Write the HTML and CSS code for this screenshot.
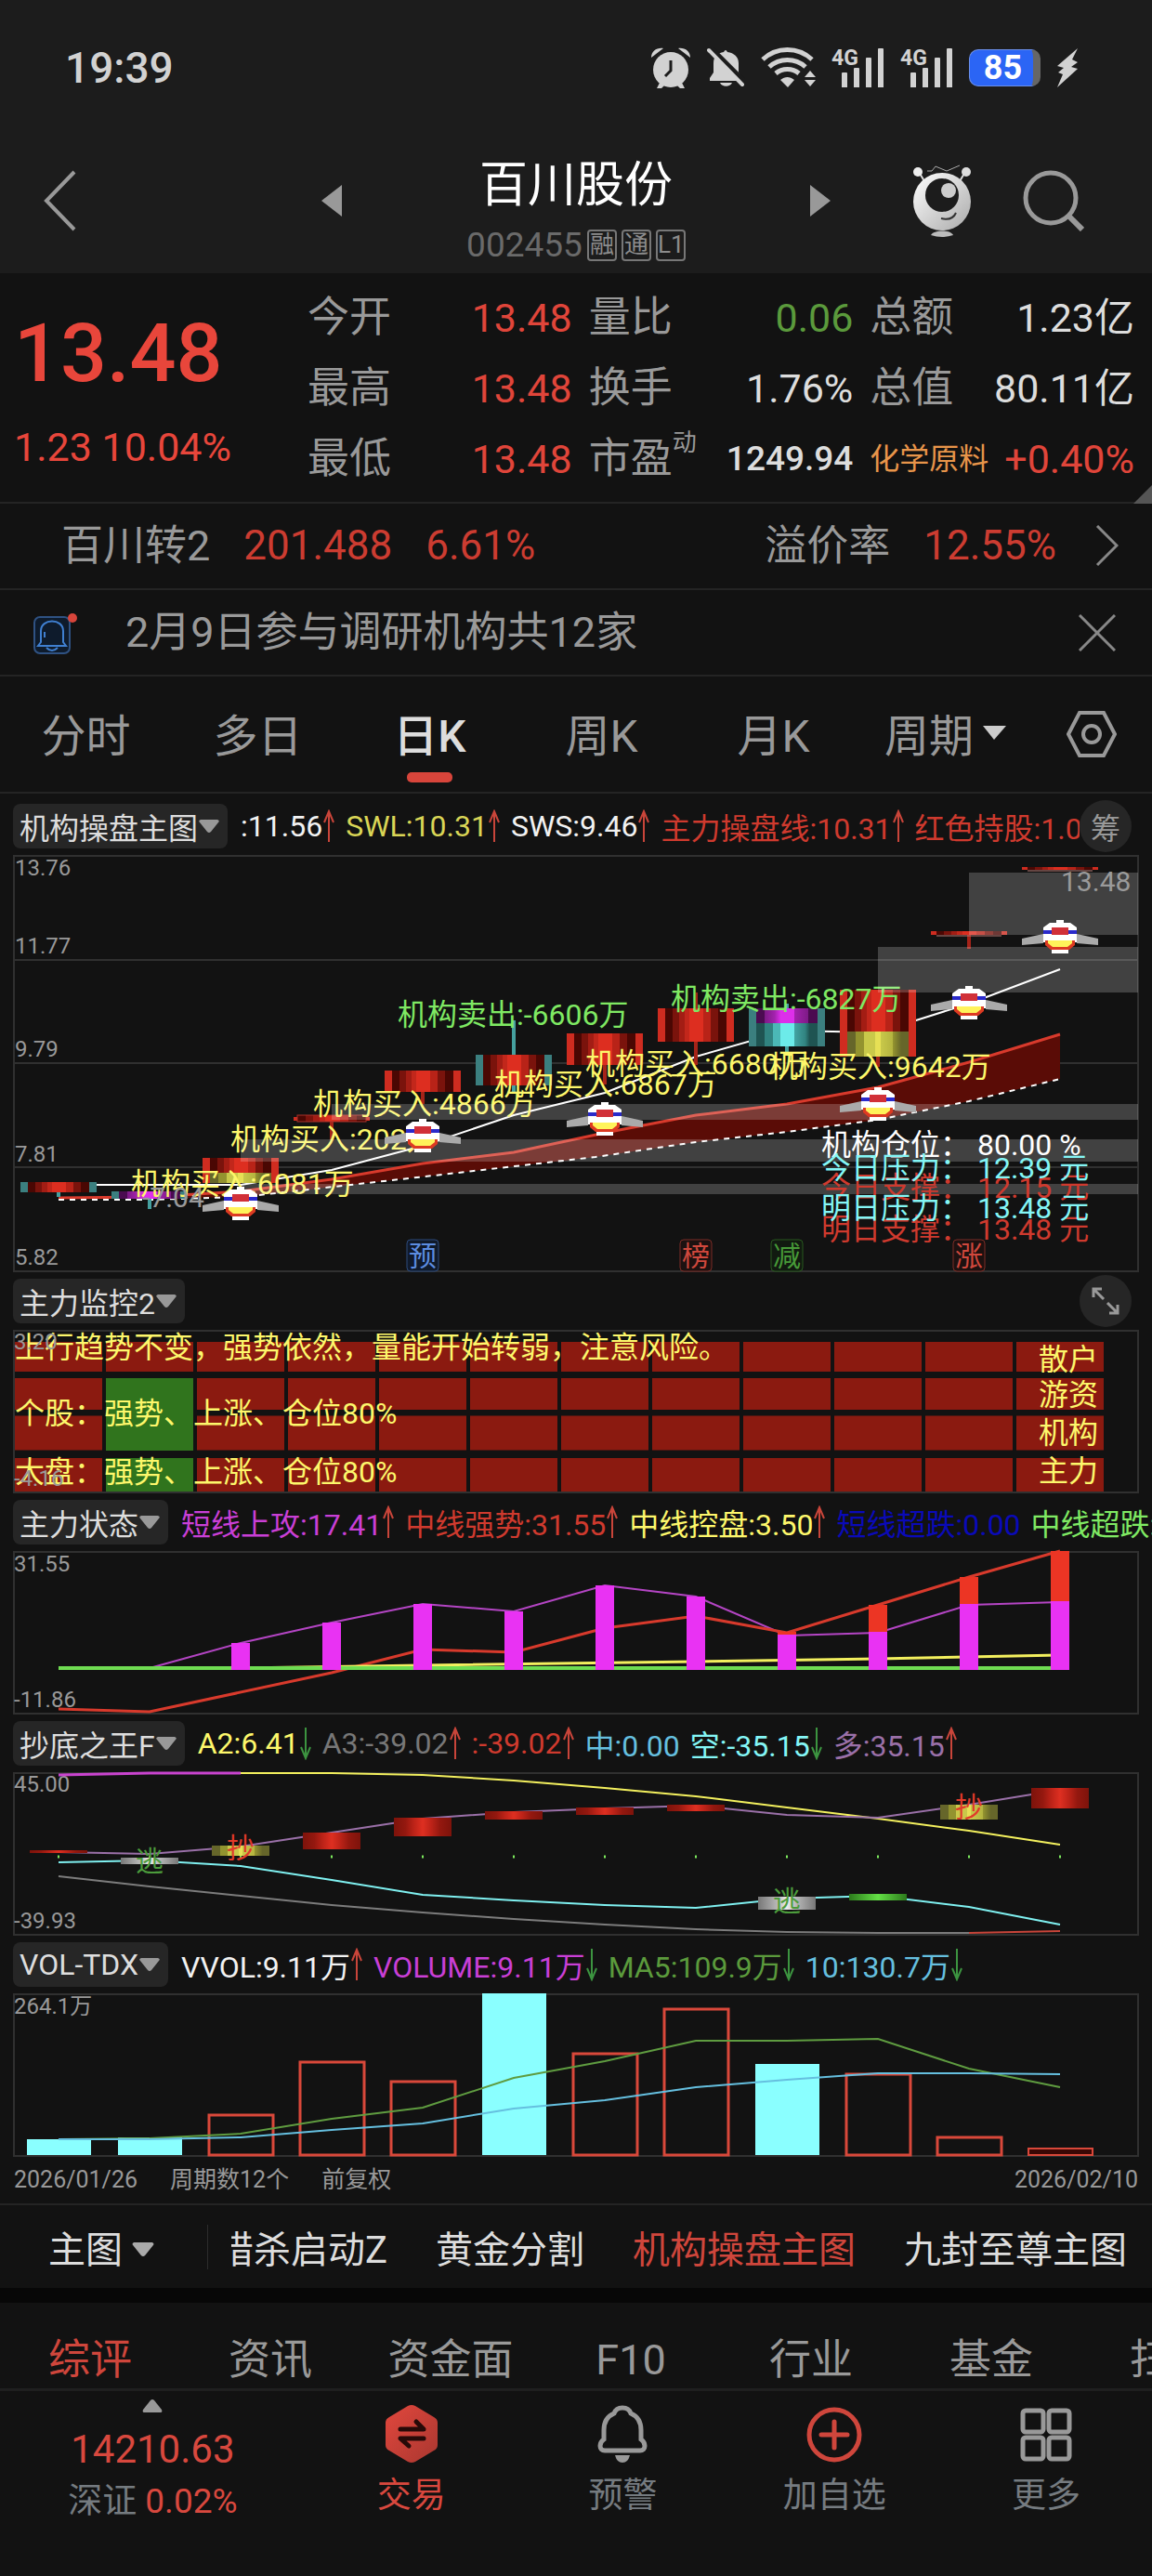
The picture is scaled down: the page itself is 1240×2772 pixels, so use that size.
FILE: index.html
```html
<!DOCTYPE html>
<html lang="zh-CN">
<head>
    <meta charset="UTF-8">
    <meta name="viewport" content="width=device-width, initial-scale=1.0">
    <title>百川股份 002455</title>
    <link rel="stylesheet" href="styles.css">
</head>
<body>
    <!-- shared shapes -->
    <svg class="defs" aria-hidden="true">
        <defs>
            <linearGradient id="gRed">
                <stop offset="0" stop-color="#4a0703"/><stop offset=".12" stop-color="#4a0703"/>
                <stop offset=".12" stop-color="#7a130c"/><stop offset=".23" stop-color="#7a130c"/>
                <stop offset=".23" stop-color="#a31d14"/><stop offset=".32" stop-color="#a31d14"/>
                <stop offset=".32" stop-color="#c2271b"/><stop offset=".4" stop-color="#c2271b"/>
                <stop offset=".4" stop-color="#dd2e20"/><stop offset=".62" stop-color="#dd2e20"/>
                <stop offset=".62" stop-color="#b82318"/><stop offset=".74" stop-color="#b82318"/>
                <stop offset=".74" stop-color="#7a130c"/><stop offset=".87" stop-color="#7a130c"/>
                <stop offset=".87" stop-color="#4a0703"/><stop offset="1" stop-color="#4a0703"/>
            </linearGradient>
            <linearGradient id="gCyan">
                <stop offset="0" stop-color="#1f5452"/><stop offset=".14" stop-color="#1f5452"/>
                <stop offset=".14" stop-color="#318380"/><stop offset=".28" stop-color="#318380"/>
                <stop offset=".28" stop-color="#4bb8b6"/><stop offset=".4" stop-color="#4bb8b6"/>
                <stop offset=".4" stop-color="#6cebe9"/><stop offset=".62" stop-color="#6cebe9"/>
                <stop offset=".62" stop-color="#43a5a3"/><stop offset=".8" stop-color="#318380"/>
                <stop offset=".87" stop-color="#1f5452"/><stop offset="1" stop-color="#1f5452"/>
            </linearGradient>
            <linearGradient id="gPink">
                <stop offset="0" stop-color="#4b0b50"/><stop offset=".14" stop-color="#4b0b50"/>
                <stop offset=".14" stop-color="#7d1a86"/><stop offset=".3" stop-color="#a322ad"/>
                <stop offset=".4" stop-color="#dd2fea"/><stop offset=".62" stop-color="#dd2fea"/>
                <stop offset=".62" stop-color="#a322ad"/><stop offset=".85" stop-color="#7d1a86"/>
                <stop offset=".85" stop-color="#4b0b50"/><stop offset="1" stop-color="#4b0b50"/>
            </linearGradient>
            <linearGradient id="gOlive">
                <stop offset="0" stop-color="#66662a"/><stop offset=".14" stop-color="#66662a"/>
                <stop offset=".14" stop-color="#93932f"/><stop offset=".28" stop-color="#93932f"/>
                <stop offset=".28" stop-color="#c9c94a"/><stop offset=".46" stop-color="#c9c94a"/>
                <stop offset=".46" stop-color="#e6e055"/><stop offset=".54" stop-color="#e6e055"/>
                <stop offset=".54" stop-color="#c9c94a"/><stop offset=".75" stop-color="#b3b33f"/>
                <stop offset=".75" stop-color="#93932f"/><stop offset=".88" stop-color="#66662a"/>
                <stop offset="1" stop-color="#66662a"/>
            </linearGradient>
            <linearGradient id="gBox">
                <stop offset="0" stop-color="#7d130b"/><stop offset=".2" stop-color="#94180f"/>
                <stop offset=".35" stop-color="#bd2318"/><stop offset=".5" stop-color="#de2f21"/>
                <stop offset=".65" stop-color="#bd2318"/><stop offset=".8" stop-color="#94180f"/>
                <stop offset="1" stop-color="#7d130b"/>
            </linearGradient>
            <linearGradient id="gGray">
                <stop offset="0" stop-color="#777"/><stop offset=".35" stop-color="#bbb"/>
                <stop offset=".5" stop-color="#eee"/><stop offset=".65" stop-color="#bbb"/>
                <stop offset="1" stop-color="#777"/>
            </linearGradient>
            <linearGradient id="gGreen">
                <stop offset="0" stop-color="#2c7a1c"/><stop offset=".5" stop-color="#63e045"/>
                <stop offset="1" stop-color="#2c7a1c"/>
            </linearGradient>
            <linearGradient id="gHex" x2="1" y2="1">
                <stop offset="0" stop-color="#e2473d"/><stop offset="1" stop-color="#a93730"/>
            </linearGradient>
            <linearGradient id="gRobot" x2="1" y2="1">
                <stop offset="0" stop-color="#fff"/><stop offset="1" stop-color="#aaa"/>
            </linearGradient>
        </defs>
        <symbol id="up" viewBox="0 0 14 36"><path d="M7 35V2M2 14 7 2l5 12" fill="none" stroke="#c9453a" stroke-width="2"/></symbol>
        <symbol id="down" viewBox="0 0 14 36"><path d="M7 1v33M2 22l5 12 5-12" fill="none" stroke="#3c9440" stroke-width="2"/></symbol>
        <symbol id="caret" viewBox="0 0 22 14"><path d="M2 0h18q3 1 1 3l-8 10q-2 2-4 0L1 3q-2-2 1-3z" fill="currentColor"/></symbol>
        <symbol id="plane" viewBox="0 0 82 36">
            <path d="M0 20 23 15v10L0 27zM82 20 59 15v10l23 2z" fill="#aaa"/>
            <path d="M37 0h8v3h7l7 5v16h-5l-4 7v5H32v-5l-4-7h-5V8l7-5h7z" fill="#fff"/>
            <path d="M23 11h36v4H23z" fill="#2a2acb"/>
            <path d="M32 8h18v8H32z" fill="#d13038"/>
            <path d="M25 22h3v3h26v-3h3v5l-6 5H31l-6-5z" fill="#dd3a22"/>
            <path d="M28 22h26v3l-5 4H33l-5-4z" fill="#fff35a"/>
        </symbol>
        <symbol id="bars" viewBox="0 0 57 44">
            <path d="M11 28q0-1 1-1h4q1 0 1 1v15h-6zM24 23q0-1 1-1h4q1 0 1 1v20h-6zM37 12q0-1 1-1h4q1 0 1 1v31h-6zM50 2q0-1 1-1h4q1 0 1 1v41h-6z" fill="#d2d2d2"/>
        </symbol>
    </svg>

    <div class="app">
        <div class="top">
            <div class="status">
                <time>19:39</time>
                <div class="status-icons">
                    <svg width="44" height="44" viewBox="0 0 44 44" fill="#d2d2d2">
                        <circle cx="22" cy="24" r="19"/>
                        <path d="M10 38 7 44h5l3-3zM34 38l3 6h-5l-3-3zM1 11C1 4 7 0 14 1zM43 11C43 4 37 0 30 1z"/>
                        <path d="M22 14v11l-6 6" fill="none" stroke="#1c1c1c" stroke-width="3"/>
                    </svg>
                    <svg width="41" height="44" viewBox="0 0 41 44" fill="#d2d2d2">
                        <path d="M3 36v-3l4-6V17C7 9 12 6 18 5q2-4 4 0c7 1 12 5 12 12v10l4 6v3zM14 38h13c-2 5-11 5-13 0z"/>
                        <path d="M4 1 41 38" stroke="#1c1c1c" stroke-width="6"/>
                        <path d="M2 3 38 40" stroke="#d2d2d2" stroke-width="4" stroke-linecap="round"/>
                    </svg>
                    <svg width="59" height="44" viewBox="0 0 59 44">
                        <path d="M2 13C17-1 40-1 55 13M9 21c11-10 28-10 39 0M16 28c7-6 18-6 25 0" fill="none" stroke="#d2d2d2" stroke-width="5"/>
                        <path d="M21 35c5-4 10-4 15 0l-7 8zM47 32l6-7 6 7zM47 35h12l-6 7z" fill="#d2d2d2"/>
                    </svg>
                    <svg class="signal" viewBox="0 0 57 44"><text x="0" y="19">4G</text><use href="#bars"/></svg>
                    <svg class="signal" viewBox="0 0 57 44"><text x="0" y="19">4G</text><use href="#bars"/></svg>
                    <span class="battery">85</span>
                    <svg width="24" height="44" viewBox="0 0 24 44" fill="#d2d2d2"><path d="M23 1 1 20l7 2-6 5 5 2L1 43l22-20-7-2 7-5-6-3z"/></svg>
                </div>
            </div>
            <header class="header">
                <button class="icon-btn back" aria-label="返回"><svg width="36" height="66" viewBox="0 0 36 66" fill="none" stroke="#999" stroke-width="4"><path d="M33 2 3 33l30 31"/></svg></button>
                <div class="stock-nav">
                    <button class="icon-btn" aria-label="上一只"><svg width="22" height="34"><path d="M22 0v34L0 17z" fill="#999"/></svg></button>
                    <div class="stock-name">
                        <h1>百川股份</h1>
                        <p>002455 <span>融</span><span>通</span><span>L1</span></p>
                    </div>
                    <button class="icon-btn" aria-label="下一只"><svg width="22" height="34"><path d="M0 0v34l22-17z" fill="#999"/></svg></button>
                </div>
                <div class="header-tools">
                    <button class="icon-btn" aria-label="助手">
                        <svg width="62" height="78" viewBox="0 0 62 78">
                            <path d="M6 8l6 10M56 8l-6 10" stroke="#ddd" stroke-width="2"/>
                            <circle cx="5" cy="8" r="5" fill="#eee"/><circle cx="57" cy="8" r="5" fill="#ddd"/>
                            <path d="M15 7h5l4-5 12 5 14-6" fill="none" stroke="#aaa" stroke-width="1"/>
                            <circle cx="31" cy="40" r="31" fill="url(#gRobot)"/>
                            <circle cx="31" cy="33" r="18" fill="#1c1c1c"/>
                            <circle cx="38" cy="28" r="8" fill="#ccc"/>
                            <path d="M30 58q12 3 16-6" fill="none" stroke="#333" stroke-width="2"/>
                            <path d="M19 76c3-6 21-6 24 0q-12 4-24 0z" fill="#bbb"/>
                        </svg>
                    </button>
                    <button class="icon-btn" aria-label="搜索"><svg width="66" height="66" viewBox="0 0 66 66" fill="none" stroke="#999" stroke-width="5"><circle cx="30" cy="30" r="27"/><path d="m49 49 15 15" stroke-width="6"/></svg></button>
                </div>
            </header>
        </div>

        <section class="quote">
            <div class="price">
                <strong>13.48</strong>
                <p>1.23 10.04%</p>
            </div>
            <dl class="figures">
                <div><dt>今开</dt><dd class="red">13.48</dd></div>
                <div><dt>量比</dt><dd class="green">0.06</dd></div>
                <div><dt>总额</dt><dd>1.23亿</dd></div>
                <div><dt>最高</dt><dd class="red">13.48</dd></div>
                <div><dt>换手</dt><dd>1.76%</dd></div>
                <div><dt>总值</dt><dd>80.11亿</dd></div>
                <div><dt>最低</dt><dd class="red">13.48</dd></div>
                <div><dt>市盈<sup>动</sup></dt><dd class="small">1249.94</dd></div>
                <div><dt class="sector">化学原料</dt><dd class="red">+0.40%</dd></div>
            </dl>
            <i class="corner"></i>
        </section>

        <a class="bond" href="#bond">
            <span>百川转2</span><b>201.488</b><b>6.61%</b>
            <span class="premium">溢价率</span><b>12.55%</b>
            <svg width="25" height="45" viewBox="0 0 25 45" fill="none" stroke="#888" stroke-width="3"><path d="m2 1 21 21L2 43"/></svg>
        </a>

        <div class="notice">
            <svg width="48" height="48" viewBox="0 0 48 48" fill="none">
                <rect x="1" y="7" width="38" height="39" rx="6" fill="#0e1b2c" stroke="#2f5283" stroke-width="2"/>
                <path d="M8 34V22c0-14 24-14 24 0v12l3 4H5z M14 40q6 6 12 0M12 29v-6" stroke="#3f7fd0" stroke-width="2"/>
                <circle cx="42" cy="8" r="5" fill="#d8453b"/>
            </svg>
            <span>2月9日参与调研机构共12家</span>
            <button class="icon-btn" aria-label="关闭"><svg width="40" height="40" viewBox="0 0 40 40" stroke="#888" stroke-width="3"><path d="m1 1 38 38M39 1 1 39"/></svg></button>
        </div>

        <nav class="periods">
            <button>分时</button>
            <button>多日</button>
            <button class="on">日K</button>
            <button>周K</button>
            <button>月K</button>
            <button>周期<svg width="25" height="15"><path d="M0 0h25L12 15z" fill="#ccc"/></svg></button>
            <button class="settings" aria-label="设置"><svg width="54" height="50" viewBox="0 0 54 50" fill="none" stroke="#999" stroke-width="4"><path d="M14 2h26l12 23-12 23H14L2 25z"/><circle cx="27" cy="25" r="9"/></svg></button>
        </nav>

        <main class="charts">
            <div class="chart-head">
                <button class="pill">机构操盘主图<svg><use href="#caret"/></svg></button>
                <div class="values">
                    <span class="white">:11.56<svg><use href="#up"/></svg></span>
                    <span class="gold">SWL:10.31<svg><use href="#up"/></svg></span>
                    <span class="white">SWS:9.46<svg><use href="#up"/></svg></span>
                    <span class="deep">主力操盘线:10.31<svg><use href="#up"/></svg></span>
                    <span class="deep">红色持股:1.00</span>
                </div>
                <button class="round">筹</button>
            </div>
            <svg class="chart" viewBox="0 0 1212 449">
                <path class="frame" d="M1 1h1210v447H1zM1 113h1210M1 224h1210M1 336h1210"/>
                <path d="M49 369 147 368 245 362 343 349 441 332 539 320 637 299 735 280 833 268 931 250 1029 223 1127 193V241L1029 265 931 285 833 298 735 309 627 325 435 347 292 363 245 368 147 370z" fill="#5a0c06"/>
                <path class="line" d="M49 355H245L343 339 441 313 539 280 637 256 735 217 833 189 931 191 1029 160 1127 123" stroke="#fff"/>
                <path class="line" d="M49 369 147 368 245 362 343 349 441 332 539 320 637 299 735 280 833 268 931 250 1029 223 1127 193" stroke="#d83a2c" stroke-width="3"/>
                <path class="line" d="M49 371H147L245 368 292 363 435 347 627 325 735 309 833 298 931 285 1029 265 1127 241" stroke="#fff" stroke-dasharray="6 6"/>

                <!-- candles: wick, side walls, body -->
                <path d="M49 352v16M147 362v19M539 178v77M833 160v56" stroke="#45a09f" stroke-width="4"/>
                <path d="M343 287v20M441 250v18M637 220v27M735 148v78M931 210v18M1029 86v15" stroke="#a52319" stroke-width="4"/>
                <path d="M8 352h82v11H8zM106 362h82v8h-82zM498 215h82v33h-82zM792 165h82v41h-82z" fill="#3b7f7f"/>
                <path d="M204 326h82v27h-82zM302 282h82v4h-82zM400 232h82v23h-82zM596 192h82v34h-82zM694 165h82v36h-82zM890 145h82v72h-82zM988 82h82v4h-82zM1086 13h82v3h-82z" fill="#cf2c20"/>
                <g fill="url(#gRed)">
                    <rect x="16" y="352" width="66" height="11"/>
                    <rect x="212" y="326" width="66" height="27"/>
                    <rect x="306" y="280" width="74" height="7" stroke="#a8332a"/>
                    <rect x="408" y="232" width="66" height="23"/>
                    <rect x="506" y="215" width="66" height="33"/>
                    <rect x="604" y="192" width="66" height="34"/>
                    <rect x="702" y="165" width="66" height="36"/>
                    <rect x="898" y="145" width="66" height="45"/>
                    <rect x="994" y="82" width="70" height="4"/>
                    <rect x="1092" y="13" width="70" height="3"/>
                </g>
                <path d="M994 87h70M1092 17h70" stroke="#b97b75"/>
                <rect x="114" y="362" width="66" height="8" fill="url(#gPink)"/>
                <rect x="800" y="165" width="66" height="16" fill="url(#gPink)"/>
                <rect x="800" y="181" width="66" height="25" fill="url(#gCyan)"/>
                <rect x="212" y="342" width="66" height="11" fill="url(#gOlive)"/>
                <rect x="898" y="190" width="66" height="27" fill="url(#gOlive)"/>

                <g class="t32 yellow">
                    <text x="127" y="365">机构买入:6081万</text>
                    <text x="234" y="317">机构买入:202万</text>
                    <text x="323" y="279">机构买入:4866万</text>
                    <text x="518" y="258">机构买入:6867万</text>
                    <text x="616" y="236">机构买入:6680万</text>
                    <text x="813" y="239">机构买入:9642万</text>
                </g>
                <g class="t32 lime">
                    <text x="414" y="183">机构卖出:-6606万</text>
                    <text x="708" y="166">机构卖出:-6827万</text>
                </g>
                <path d="M1029 19h182v67h-182zM931 99h280v49H931zM343 268h868v17H343zM245 306h966v24H245zM245 354h966v11H245z" fill="#fff" fill-opacity=".2"/>
                <g>
                    <use href="#plane" x="204" y="357" width="82" height="36"/>
                    <use href="#plane" x="400" y="284" width="82" height="36"/>
                    <use href="#plane" x="596" y="266" width="82" height="36"/>
                    <use href="#plane" x="890" y="250" width="82" height="36"/>
                    <use href="#plane" x="988" y="141" width="82" height="36"/>
                    <use href="#plane" x="1086" y="70" width="82" height="36"/>
                </g>
                <g class="t32">
                    <text x="870" y="323" fill="#fff">机构仓位： 80.00 %</text>
                    <text x="870" y="369" fill="#cf3a2e">今日支撑： 12.15 元</text>
                    <text x="870" y="348" fill="#84f6f6">今日压力： 12.39 元</text>
                    <text x="870" y="414" fill="#cf3a2e">明日支撑： 13.48 元</text>
                    <text x="870" y="391" fill="#84f6f6">明日压力： 13.48 元</text>
                </g>
                <g class="peak">
                    <text x="139" y="379">-7.04</text>
                    <text x="1128" y="39">13.48</text>
                </g>
                <g class="axis">
                    <text x="2" y="22">13.76</text>
                    <text x="2" y="106">11.77</text>
                    <text x="2" y="217">9.79</text>
                    <text x="2" y="330">7.81</text>
                    <text x="2" y="441">5.82</text>
                </g>
                <g class="mark">
                    <rect x="424" y="414" width="34" height="34" rx="4" stroke="#2d4a7c" fill="#101a2b"/><text x="441" y="442" fill="#5c8ce0">预</text>
                    <rect x="718" y="414" width="34" height="34" rx="4" stroke="#7c2c26" fill="#1d1110"/><text x="735" y="442" fill="#d0483d">榜</text>
                    <rect x="816" y="414" width="34" height="34" rx="4" stroke="#28591f" fill="#111a10"/><text x="833" y="442" fill="#479a38">减</text>
                    <rect x="1012" y="414" width="34" height="34" rx="4" stroke="#7c2c26" fill="#1d1110"/><text x="1029" y="442" fill="#d0483d">涨</text>
                </g>
            </svg>

            <div class="chart-head">
                <button class="pill">主力监控2<svg><use href="#caret"/></svg></button>
                <div class="values"></div>
                <button class="round" aria-label="展开"><svg width="30" height="30" viewBox="0 0 30 30" fill="none" stroke="#999" stroke-width="3"><path d="m2 2 11 11M2 11V2h9M28 28 17 17M28 19v9h-9"/></svg></button>
            </div>
            <svg class="chart" viewBox="0 0 1212 176">
                <path class="frame" d="M1 1h1210v174H1z"/>
                <g stroke="#8b1a10" stroke-dasharray="94 4">
                    <path d="M2 29H1174" stroke-width="32"/>
                    <path d="M2 69H1174" stroke-width="34"/>
                    <path d="M2 111H1174" stroke-width="37"/>
                    <path d="M2 156H1174" stroke-width="36"/>
                </g>
                <path d="M100 52h94v78h-94zM100 138h94v36h-94z" fill="#30741d"/>
                <g class="t32 yellow">
                    <text x="2" y="30">上行趋势不变，强势依然，量能开始转弱，注意风险。</text>
                    <text x="2" y="101">个股：强势、上涨、仓位80%</text>
                    <text x="2" y="164">大盘：强势、上涨、仓位80%</text>
                    <text x="1104" y="43">散户</text>
                    <text x="1104" y="81">游资</text>
                    <text x="1104" y="122">机构</text>
                    <text x="1104" y="163">主力</text>
                </g>
                <g class="axis">
                    <text x="1" y="21">3.20</text>
                    <text x="1" y="168">-4.16</text>
                </g>
            </svg>

            <div class="chart-head">
                <button class="pill">主力状态<svg><use href="#caret"/></svg></button>
                <div class="values">
                    <span class="magenta">短线上攻:17.41<svg><use href="#up"/></svg></span>
                    <span class="deep">中线强势:31.55<svg><use href="#up"/></svg></span>
                    <span class="yellow">中线控盘:3.50<svg><use href="#up"/></svg></span>
                    <span class="navy">短线超跌:0.00</span>
                    <span class="lime">中线超跌:0.00</span>
                </div>
            </div>
            <svg class="chart" viewBox="0 0 1212 176">
                <path class="frame" d="M1 1h1210v174H1z"/>
                <g class="axis">
                    <text x="1" y="22">31.55</text>
                    <text x="1" y="168">-11.86</text>
                </g>
                <path class="line" d="M147 126 245 99 343 77 441 57 539 65 637 37 735 49 833 91 931 88 1029 58 1127 55" stroke="#b445c4"/>
                <path class="line" d="M49 170 147 173 343 131 441 106 539 109 637 83 735 70 833 88 931 58 1029 28 1127 0" stroke="#d83a2c" stroke-width="3"/>
                <path class="line" d="M49 126H245L441 123 735 119 931 116 1127 112" stroke="#f3f05e" stroke-width="3"/>
                <path class="line" d="M49 126H1127" stroke="#6fdc52" stroke-width="4"/>
                <g stroke-width="20">
                    <path d="M833 128V87M931 128V58M1029 128V28M1127 128V0" stroke="#ec3524"/>
                    <path d="M245 128V99M343 128V77M441 128V57M539 128V65M637 128V37M735 128V49M833 128V90M931 128V87M1029 128V57M1127 128V54" stroke="#e932f3"/>
                </g>
            </svg>

            <div class="chart-head">
                <button class="pill">抄底之王F<svg><use href="#caret"/></svg></button>
                <div class="values">
                    <span class="yellow">A2:6.41<svg><use href="#down"/></svg></span>
                    <span class="gray">A3:-39.02<svg><use href="#up"/></svg></span>
                    <span class="deep">:-39.02<svg><use href="#up"/></svg></span>
                    <span class="blue">中:0.00</span>
                    <span class="cyan">空:-35.15<svg><use href="#down"/></svg></span>
                    <span class="purple">多:35.15<svg><use href="#up"/></svg></span>
                </div>
            </div>
            <svg class="chart" viewBox="0 0 1212 176">
                <path class="frame" d="M1 1h1210v174H1z"/>
                <g class="axis">
                    <text x="1" y="21">45.00</text>
                    <text x="1" y="168">-39.93</text>
                </g>
                <path class="line" d="M245 1H343L441 3 539 9 637 17 735 26 833 38 931 50 1029 63 1127 78" stroke="#f3f05e"/>
                <path class="line" d="M49 3 147 1H245" stroke="#c944cf" stroke-width="3"/>
                <path class="line" d="M49 86 147 88 245 80 343 65 441 50 539 43 637 39 735 36 833 46 931 49 1029 35 1127 19" stroke="#9a70a8"/>
                <path class="line" d="M49 97 147 95 245 101 343 116 441 132 539 138 637 143 735 146 833 136 931 133 1029 145 1127 164" stroke="#7ff0f0"/>
                <path class="line" d="M49 112 147 123 245 133 343 143 441 151 539 158 637 164 735 169 833 172 931 173H1029" stroke="#7c7c7c"/>
                <path class="line" d="M1029 173 1127 171" stroke="#c9453a"/>
                <path d="M48 91H1140" stroke="#7be85c" stroke-width="3" stroke-dasharray="2 96"/>
                <g fill="url(#gBox)">
                    <rect x="18" y="84" width="62" height="3"/>
                    <rect x="312" y="65" width="62" height="18"/>
                    <rect x="410" y="49" width="62" height="20"/>
                    <rect x="508" y="42" width="62" height="9"/>
                    <rect x="606" y="38" width="62" height="8"/>
                    <rect x="704" y="35" width="62" height="7"/>
                    <rect x="1096" y="17" width="62" height="22"/>
                </g>
                <rect x="116" y="92" width="62" height="7" fill="url(#gGray)"/>
                <rect x="802" y="134" width="62" height="14" fill="url(#gGray)"/>
                <rect x="214" y="79" width="62" height="11" fill="url(#gOlive)"/>
                <rect x="998" y="35" width="62" height="16" fill="url(#gOlive)"/>
                <rect x="900" y="131" width="62" height="7" fill="url(#gGreen)"/>
                <g class="mark">
                    <text x="147" y="106" fill="#4c9c3c">逃</text>
                    <text x="245" y="92" fill="#e03a2a">抄</text>
                    <text x="833" y="149" fill="#4c9c3c">逃</text>
                    <text x="1029" y="48" fill="#e03a2a">抄</text>
                </g>
            </svg>

            <div class="chart-head">
                <button class="pill">VOL-TDX<svg><use href="#caret"/></svg></button>
                <div class="values">
                    <span class="white">VVOL:9.11万<svg><use href="#up"/></svg></span>
                    <span class="magenta">VOLUME:9.11万<svg><use href="#down"/></svg></span>
                    <span class="green">MA5:109.9万<svg><use href="#down"/></svg></span>
                    <span class="blue">10:130.7万<svg><use href="#down"/></svg></span>
                </div>
            </div>
            <svg class="chart" viewBox="0 0 1212 176">
                <path class="frame" d="M1 1h1210v174H1z"/>
                <g class="axis"><text x="1" y="22">264.1万</text></g>
                <path d="M15 157h69v17H15zM113 155h69v19h-69zM505 0h69v174h-69zM799 76h69v98h-69z" fill="#8affff"/>
                <path d="M211 131h69v43h-69zM309 74h69v100h-69zM407 95h69v79h-69zM603 65h69v109h-69zM701 17h69v157h-69zM897 87h69v87h-69zM995 155h69v19h-69z" fill="none" stroke="#d9483a" stroke-width="3"/>
                <path d="M1093 167h69v7h-69z" fill="#3a0805" stroke="#d9483a" stroke-width="2"/>
                <path class="line" d="M49 157 147 156 245 151 343 135 441 123 539 91 637 73 735 51H833L931 49 1029 81 1127 101" stroke="#5f9c40"/>
                <path class="line" d="M49 157H147L245 155 343 147 441 140 539 124 637 115 735 101 833 93 931 86H1029L1127 87" stroke="#65bfdf"/>
            </svg>
            <div class="range"><span>2026/01/26</span><span>周期数12个</span><span>前复权</span><span class="end">2026/02/10</span></div>
        </main>

        <div class="strip">
            <button class="strip-menu">主图<svg width="24" height="15" viewBox="0 0 22 14"><use href="#caret"/></svg></button>
            <div class="strip-list">
                <button>猎杀启动Z</button>
                <button>黄金分割</button>
                <button class="on">机构操盘主图</button>
                <button>九封至尊主图</button>
            </div>
        </div>

        <nav class="info-tabs">
            <a class="on" href="#zp">综评</a>
            <a href="#zx">资讯</a>
            <a href="#zj">资金面</a>
            <a href="#f10">F10</a>
            <a href="#hy">行业</a>
            <a href="#jj">基金</a>
            <a href="#sl">扫雷</a>
        </nav>

        <footer class="bottom">
            <a class="index" href="#index">
                <svg width="22" height="14" viewBox="0 0 22 14"><path d="M9 1q2-2 4 0l8 10q1 3-1 3H2q-2 0-1-3z" fill="#999"/></svg>
                <b>14210.63</b>
                <span>深证 <em>0.02%</em></span>
            </a>
            <button class="trade">
                <svg width="62" height="62" viewBox="0 0 62 62">
                    <path d="M27 1q4-2 8 0l20 12q4 2 4 6v24q0 4-4 6L35 61q-4 2-8 0L7 49q-4-2-4-6V19q0-4 4-6z" fill="url(#gHex)"/>
                    <path d="M19 26h25l-8-8M44 36H19l9 8" fill="none" stroke="#260a08" stroke-width="5" stroke-linecap="round" stroke-linejoin="round"/>
                </svg>交易
            </button>
            <button>
                <svg width="62" height="62" viewBox="0 0 62 62">
                    <path d="M31 3c-5 0-8 3-9 6-7 3-11 9-11 18v10c-3 2-4 4-4 7 0 3 2 5 5 5h38c3 0 5-2 5-5 0-3-1-5-4-7V27c0-9-4-15-11-18-1-3-4-6-9-6z" fill="none" stroke="#999" stroke-width="5"/>
                    <path d="M23 54h16q-2 8-8 8t-8-8z" fill="#999"/>
                </svg>预警
            </button>
            <button>
                <svg width="62" height="62" viewBox="0 0 62 62" fill="none" stroke="#cf463c" stroke-width="5"><circle cx="31" cy="32" r="27"/><path d="M31 18v28M17 32h28" stroke-linecap="round"/></svg>加自选
            </button>
            <button>
                <svg width="62" height="62" viewBox="0 0 62 62" fill="none" stroke="#999" stroke-width="5"><rect x="6" y="6" width="22" height="23" rx="3"/><rect x="34" y="6" width="22" height="23" rx="3"/><rect x="6" y="35" width="22" height="23" rx="3"/><rect x="34" y="35" width="22" height="23" rx="3"/></svg>更多
            </button>
        </footer>
    </div>
</body>
</html>
```
FILE: styles.css
```css
* {
    box-sizing: border-box;
}
body {
    margin: 0;
    min-height: 100vh;
    background-color: #121212;
    color: #999;
    font-family: Roboto, "Noto Sans CJK SC", sans-serif;
}
h1, p, dl, dd {
    margin: 0;
}
button {
    padding: 0;
    border: none;
    background: none;
    color: inherit;
    font: inherit;
    cursor: pointer;
}
a {
    color: inherit;
    text-decoration: none;
}
svg {
    display: block;
    flex-shrink: 0;
}
.defs {
    position: absolute;
    width: 0;
    height: 0;
}
.app {
    overflow: hidden;
}

/* colours of figures and indicator values */
.white { color: #f2f2f2; }
.red { color: #e0453a; }
.deep { color: #cf3a2e; }
.green { color: #5b9a3c; }
.gold { color: #d9d556; }
.yellow { color: #fdf76b; fill: #fdf76b; }
.lime { color: #7fe963; fill: #7fe963; }
.magenta { color: #c93fd6; }
.navy { color: #0a0ab8; }
.gray { color: #777; }
.blue { color: #65bfdf; }
.cyan { color: #84f6f6; }
.purple { color: #9a70a8; }

/* status bar and header */
.top {
    background-color: #1c1c1c;
}
.status {
    display: flex;
    align-items: center;
    justify-content: space-between;
    height: 146px;
    padding: 0 79px 0 70px;
    color: #d2d2d2;
    font-size: 46px;
    font-weight: 500;
}
.status-icons {
    display: flex;
    align-items: center;
    gap: 17px;
}
.signal {
    width: 57px;
    height: 44px;
    fill: #d2d2d2;
    font-size: 23px;
    font-weight: 700;
}
.battery {
    width: 77px;
    height: 40px;
    padding-left: 3px;
    border: 1px solid #6b8fe8;
    border-right: 8px solid #666;
    border-radius: 10px;
    background-color: #2b65f5;
    color: #fff;
    font-size: 36px;
    font-weight: 700;
    line-height: 38px;
    text-align: center;
}
.header {
    display: grid;
    grid-template-columns: 1fr 548px 1fr;
    align-items: center;
    height: 148px;
    padding-bottom: 8px;
}
.back {
    justify-self: start;
    padding-left: 47px;
}
.stock-nav {
    display: flex;
    align-items: center;
    justify-content: space-between;
}
.stock-name {
    padding-top: 19px;
    text-align: center;
}
.stock-name h1 {
    color: #fff;
    font-size: 52px;
    font-weight: 400;
    line-height: 60px;
}
.stock-name p {
    display: flex;
    align-items: center;
    justify-content: center;
    gap: 5px;
    margin-top: 16px;
    color: #6a6a6a;
    font-size: 37px;
    line-height: 36px;
}
.stock-name span {
    width: 32px;
    height: 34px;
    border: 2px solid #777;
    border-radius: 4px;
    color: #8c8c8c;
    font-size: 26px;
    line-height: 29px;
}
.header-tools {
    display: flex;
    align-items: center;
    justify-content: flex-end;
    gap: 56px;
    padding-right: 73px;
}

/* quote */
.quote {
    position: relative;
    display: flex;
    padding: 10px 19px 8px 15px;
    border-bottom: 2px solid #242424;
}
.price {
    flex: 0 0 316px;
    padding-top: 32px;
    color: #e8463b;
}
.price strong {
    display: block;
    font-size: 88px;
    font-weight: 500;
    line-height: 88px;
}
.price p {
    margin-top: 32px;
    font-size: 43px;
    line-height: 50px;
}
.figures {
    flex: 1;
    display: grid;
    grid-template-columns: repeat(3, 1fr);
    column-gap: 18px;
    line-height: 76px;
}
.figures div {
    display: flex;
    justify-content: space-between;
    align-items: center;
    height: 76px;
}
.figures dt {
    font-size: 45px;
    white-space: nowrap;
}
.figures dd {
    font-size: 43px;
    white-space: nowrap;
}
.figures dd:not([class]), .figures .small {
    color: #ddd;
}
.figures .small {
    font-size: 37px;
    font-weight: 500;
}
.figures sup {
    font-size: 26px;
    line-height: 0;
    vertical-align: 24px;
}
.figures .sector {
    color: #e8954a;
    font-size: 32px;
}
.corner {
    position: absolute;
    right: 0;
    bottom: -2px;
    border-left: 20px solid transparent;
    border-bottom: 20px solid #555;
}
.bond, .notice {
    display: flex;
    align-items: center;
    padding: 23px 36px;
    border-bottom: 2px solid #242424;
    font-size: 45px;
    line-height: 45px;
}
.bond {
    gap: 36px;
    padding-left: 66px;
}
.bond b {
    color: #cc3c31;
    font-size: 44px;
    font-weight: 400;
}
.bond svg {
    margin-left: 6px;
}
.premium {
    margin-left: auto;
}
.notice {
    height: 93px;
    gap: 51px;
}
.notice button {
    margin-left: auto;
    padding-right: 3px;
}

/* period tabs */
.periods {
    display: flex;
    border-bottom: 2px solid #242424;
    font-size: 48px;
}
.periods button {
    position: relative;
    flex: 185;
    display: flex;
    align-items: center;
    justify-content: center;
    gap: 10px;
    height: 124px;
    padding-bottom: 4px;
}
.periods .settings {
    flex: 130;
    padding-bottom: 0;
}
.periods .on {
    color: #ddd;
    font-weight: 500;
}
.periods .on::after {
    content: "";
    position: absolute;
    bottom: 10px;
    width: 49px;
    height: 11px;
    border-radius: 5px;
    background-color: #d8453b;
}

/* charts */
.charts {
    padding-top: 4px;
}
.chart-head {
    display: flex;
    align-items: center;
    height: 62px;
    padding-left: 14px;
    font-size: 32px;
    white-space: nowrap;
}
.pill {
    display: flex;
    align-items: center;
    flex-shrink: 0;
    height: 48px;
    padding: 0 9px 0 7px;
    border-radius: 8px;
    background-color: #262626;
    color: #ddd;
}
.pill svg {
    width: 22px;
    height: 14px;
    margin-left: 1px;
    color: #999;
}
.values {
    flex: 1;
    display: flex;
    gap: 11px;
    min-width: 0;
    margin-left: 14px;
    overflow: hidden;
}
.values span {
    display: flex;
    align-items: center;
    flex-shrink: 0;
}
.values svg {
    width: 14px;
    height: 36px;
}
.round {
    display: flex;
    align-items: center;
    justify-content: center;
    flex: 0 0 56px;
    height: 56px;
    margin-right: 22px;
    border-radius: 50%;
    background-color: #262626;
}
.chart {
    width: calc(100% - 28px);
    height: auto;
    margin: 0 14px;
    overflow: visible;
}
.frame {
    fill: none;
    stroke: #303030;
    stroke-width: 2;
}
.line {
    fill: none;
    stroke-width: 2;
}
.line[stroke-width="3"] {
    stroke-width: 3;
}
.line[stroke-width="4"] {
    stroke-width: 4;
}
.t32 {
    font-size: 32px;
}
.axis {
    fill: #999;
    font-size: 24px;
}
.peak {
    fill: #9a9a9a;
    font-size: 30px;
}
.mark {
    font-size: 30px;
    text-anchor: middle;
}
.range {
    display: flex;
    gap: 35px;
    padding: 0 15px;
    border-bottom: 2px solid #242424;
    font-size: 25px;
    line-height: 50px;
}
.range .end {
    margin-left: auto;
}

/* indicator strip */
.strip {
    display: flex;
    align-items: center;
    height: 105px;
    border-bottom: 16px solid #070707;
    color: #ddd;
    font-size: 40px;
    white-space: nowrap;
}
.strip-menu {
    display: flex;
    align-items: center;
    gap: 10px;
    flex: 0 0 224px;
    height: 48px;
    padding-left: 52px;
    border-right: 1px solid #2c2c2c;
}
.strip-menu svg {
    margin-top: 6px;
    color: #aaa;
}
.strip-list {
    flex: 1;
    display: flex;
    justify-content: flex-end;
    gap: 52px;
    min-width: 0;
    margin: 0 27px 0 25px;
    overflow: hidden;
}
.strip-list button {
    flex-shrink: 0;
}
.strip .on, .info-tabs .on {
    color: #cf463c;
}

/* bottom */
.info-tabs {
    display: flex;
    overflow: hidden;
    padding: 34px 0 2px;
    border-bottom: 3px solid #1f1f1f;
    font-size: 45px;
    line-height: 56px;
}
.info-tabs a {
    flex: 0 0 194px;
    text-align: center;
    white-space: nowrap;
}
.bottom {
    display: flex;
    padding: 9px 0 60px;
    color: #757b80;
    font-size: 37px;
    line-height: 44px;
}
.bottom button {
    flex: 228;
    display: flex;
    flex-direction: column;
    align-items: center;
    gap: 14px;
    padding-top: 6px;
}
.bottom .trade, .index b, .index em {
    color: #d8483e;
}
.index {
    flex: 329;
    display: flex;
    flex-direction: column;
    align-items: center;
}
.index b {
    margin: 18px 0 12px;
    font-size: 42px;
    font-weight: 400;
    line-height: 44px;
}
.index em {
    font-style: normal;
}
```
